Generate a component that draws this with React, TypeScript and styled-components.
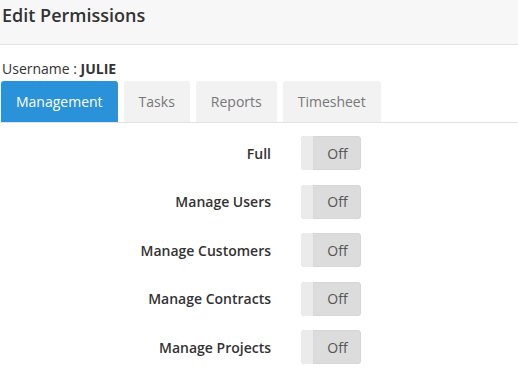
import styled, { createGlobalStyle } from "styled-components";

const GlobalStyle = createGlobalStyle`
  body {
    margin: 0;
    background: #fff;
    font-family: "Open Sans", "Noto Sans", sans-serif;
    color: #333;
  }
`;

const Header = styled.div`
  height: 45px;
  display: flex;
  align-items: center;
  padding: 0 2px 14px;
  box-sizing: border-box;
  background: #f7f7f7;
  border-bottom: 1px solid #e3e3e3;
`;
const Title = styled.h1`
  margin: 0;
  font-size: 18px;
  font-weight: 600;
  color: #333;
`;
const Username = styled.div`
  margin-top: 14px;
  padding-left: 2px;
  font-size: 14px;
  line-height: 20px;
  color: #333;
  b {
    font-weight: 700;
  }
`;
const TabBar = styled.div`
  display: flex;
  gap: 6px;
  margin-top: 2px;
  padding-left: 1px;
  border-bottom: 1px solid #e2e2e2;
`;
const Tab = styled.div<{ $active?: boolean }>`
  height: 41px;
  display: flex;
  align-items: center;
  padding: 0 15px;
  font-size: 14px;
  border-radius: 3px 3px 0 0;
  background: ${(p) => (p.$active ? "#2a92d8" : "#f2f2f2")};
  color: ${(p) => (p.$active ? "#fff" : "#777")};
`;
const List = styled.div`
  display: flex;
  flex-direction: column;
  gap: 14.6px;
  padding-top: 13px;
`;
const Row = styled.div`
  display: grid;
  grid-template-columns: 271px 60px;
  column-gap: 30px;
  align-items: center;
`;
const Label = styled.div`
  text-align: right;
  font-size: 14px;
  font-weight: 600;
  color: #333;
`;
const Switch = styled.div`
  height: 34px;
  display: flex;
  border-radius: 4px;
  overflow: hidden;
  background: #dcdcdc;
  box-shadow: inset 0 0 0 1px #d6d6d6;
`;
const Handle = styled.div`
  width: 12px;
  background: #ebebeb;
  border-right: 1px solid #d9d9d9;
`;
const SwitchText = styled.div`
  flex: 1;
  display: flex;
  align-items: center;
  justify-content: center;
  font-size: 14px;
  color: #555;
`;

const permissions = ["Full", "Manage Users", "Manage Customers", "Manage Contracts", "Manage Projects"];
const tabs = ["Management", "Tasks", "Reports", "Timesheet"];

export default function App() {
  return (
    <>
      <GlobalStyle />
      <Header>
        <Title>Edit Permissions</Title>
      </Header>
      <Username>
        Username : <b>JULIE</b>
      </Username>
      <TabBar>
        {tabs.map((t, i) => (
          <Tab key={t} $active={i === 0}>
            {t}
          </Tab>
        ))}
      </TabBar>
      <List>
        {permissions.map((p) => (
          <Row key={p}>
            <Label>{p}</Label>
            <Switch>
              <Handle />
              <SwitchText>Off</SwitchText>
            </Switch>
          </Row>
        ))}
      </List>
    </>
  );
}
